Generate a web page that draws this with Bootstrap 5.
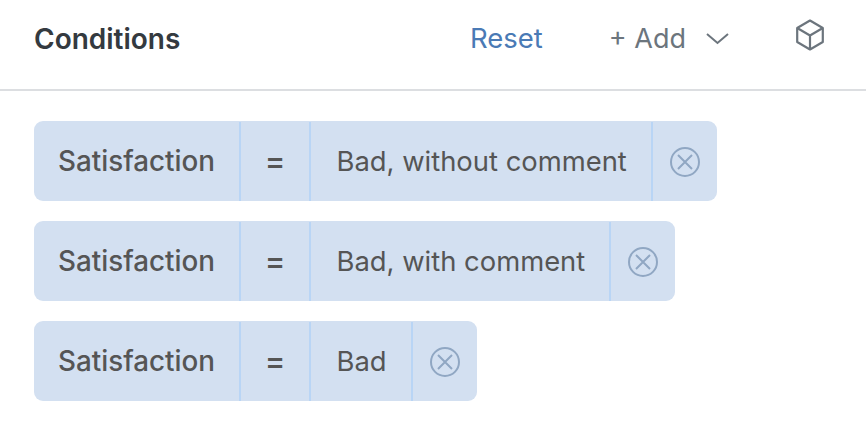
<!doctype html>
<html lang="en"><head><meta charset="utf-8"><title>Conditions</title>
<link href="https://cdn.jsdelivr.net/npm/bootstrap@5.3.0/dist/css/bootstrap.min.css" rel="stylesheet">
<style>
body{font-family:Inter,"Liberation Sans",sans-serif;background:#fff;color:#555}
.cond-head{height:91px;padding:0 42px 12px 34px;border-bottom:2px solid #dcdee1}
.cond-title{font-size:28px;font-weight:600;color:#343a40;margin:0;line-height:1}
.act-reset{font-size:27.500px;color:#4a7ab5;text-decoration:none;margin-right:66px;line-height:1}
.act-add{font-size:27px;color:#6c757d;line-height:1;margin-right:67px;white-space:nowrap}
.act-chev{margin-left:20px}
.act-cube{margin-top:-8px}
.cond-list{padding:30px 34px 0;gap:20px}
.cond-pill{height:80px;background:#d3e0f1;border-radius:9px;font-size:27.400px;width:max-content;padding-top:1px}
.seg{padding:0 24px;height:100%;border-left:2px solid #b9d5f5}
.seg:first-child{border-left:0;font-weight:500;font-size:27.800px;width:205px;white-space:nowrap}
.seg-eq{font-weight:500;font-size:31px;width:70px;justify-content:center;padding:0}
.seg-val{padding:0 24px 0 25.500px}
.seg-x{padding:0 17px;width:66px;flex:none}
</style></head><body>
<div class="cond-head d-flex align-items-center">
<h1 class="cond-title flex-grow-1">Conditions</h1>
<a href="#" class="act-reset">Reset</a>
<span class="act-add d-flex align-items-center">+ Add
<svg class="act-chev" width="23" height="12" viewBox="0 0 23 12" fill="none" stroke="#6c757d" stroke-width="2"><path d="M1 1l10.500 9L22 1"/></svg></span>
<svg class="act-cube" width="28" height="32" viewBox="0 0 28 32" fill="none" stroke="#6c757d" stroke-width="2.200" stroke-linejoin="round"><path d="M14 1.500l12.800 7.500v14L14 30.500 1.200 23V9z"/><path d="M1.200 9L14 16.500 26.800 9M14 16.500v14"/></svg>
</div>
<div class="cond-list d-flex flex-column">
<div class="cond-pill d-flex align-items-center"><div class="seg d-flex align-items-center">Satisfaction</div><div class="seg seg-eq d-flex align-items-center">=</div><div class="seg seg-val d-flex align-items-center">Bad, without comment</div><div class="seg seg-x d-flex align-items-center"><svg width="30" height="30" viewBox="0 0 30 30" fill="none" stroke="#90a7c3" stroke-width="2"><circle cx="15" cy="15" r="14"/><path d="M8 8l14 14M22 8L8 22"/></svg></div></div>
<div class="cond-pill d-flex align-items-center"><div class="seg d-flex align-items-center">Satisfaction</div><div class="seg seg-eq d-flex align-items-center">=</div><div class="seg seg-val d-flex align-items-center">Bad, with comment</div><div class="seg seg-x d-flex align-items-center"><svg width="30" height="30" viewBox="0 0 30 30" fill="none" stroke="#90a7c3" stroke-width="2"><circle cx="15" cy="15" r="14"/><path d="M8 8l14 14M22 8L8 22"/></svg></div></div>
<div class="cond-pill d-flex align-items-center"><div class="seg d-flex align-items-center">Satisfaction</div><div class="seg seg-eq d-flex align-items-center">=</div><div class="seg seg-val d-flex align-items-center">Bad</div><div class="seg seg-x d-flex align-items-center"><svg width="30" height="30" viewBox="0 0 30 30" fill="none" stroke="#90a7c3" stroke-width="2"><circle cx="15" cy="15" r="14"/><path d="M8 8l14 14M22 8L8 22"/></svg></div></div>
</div>
</body></html>
